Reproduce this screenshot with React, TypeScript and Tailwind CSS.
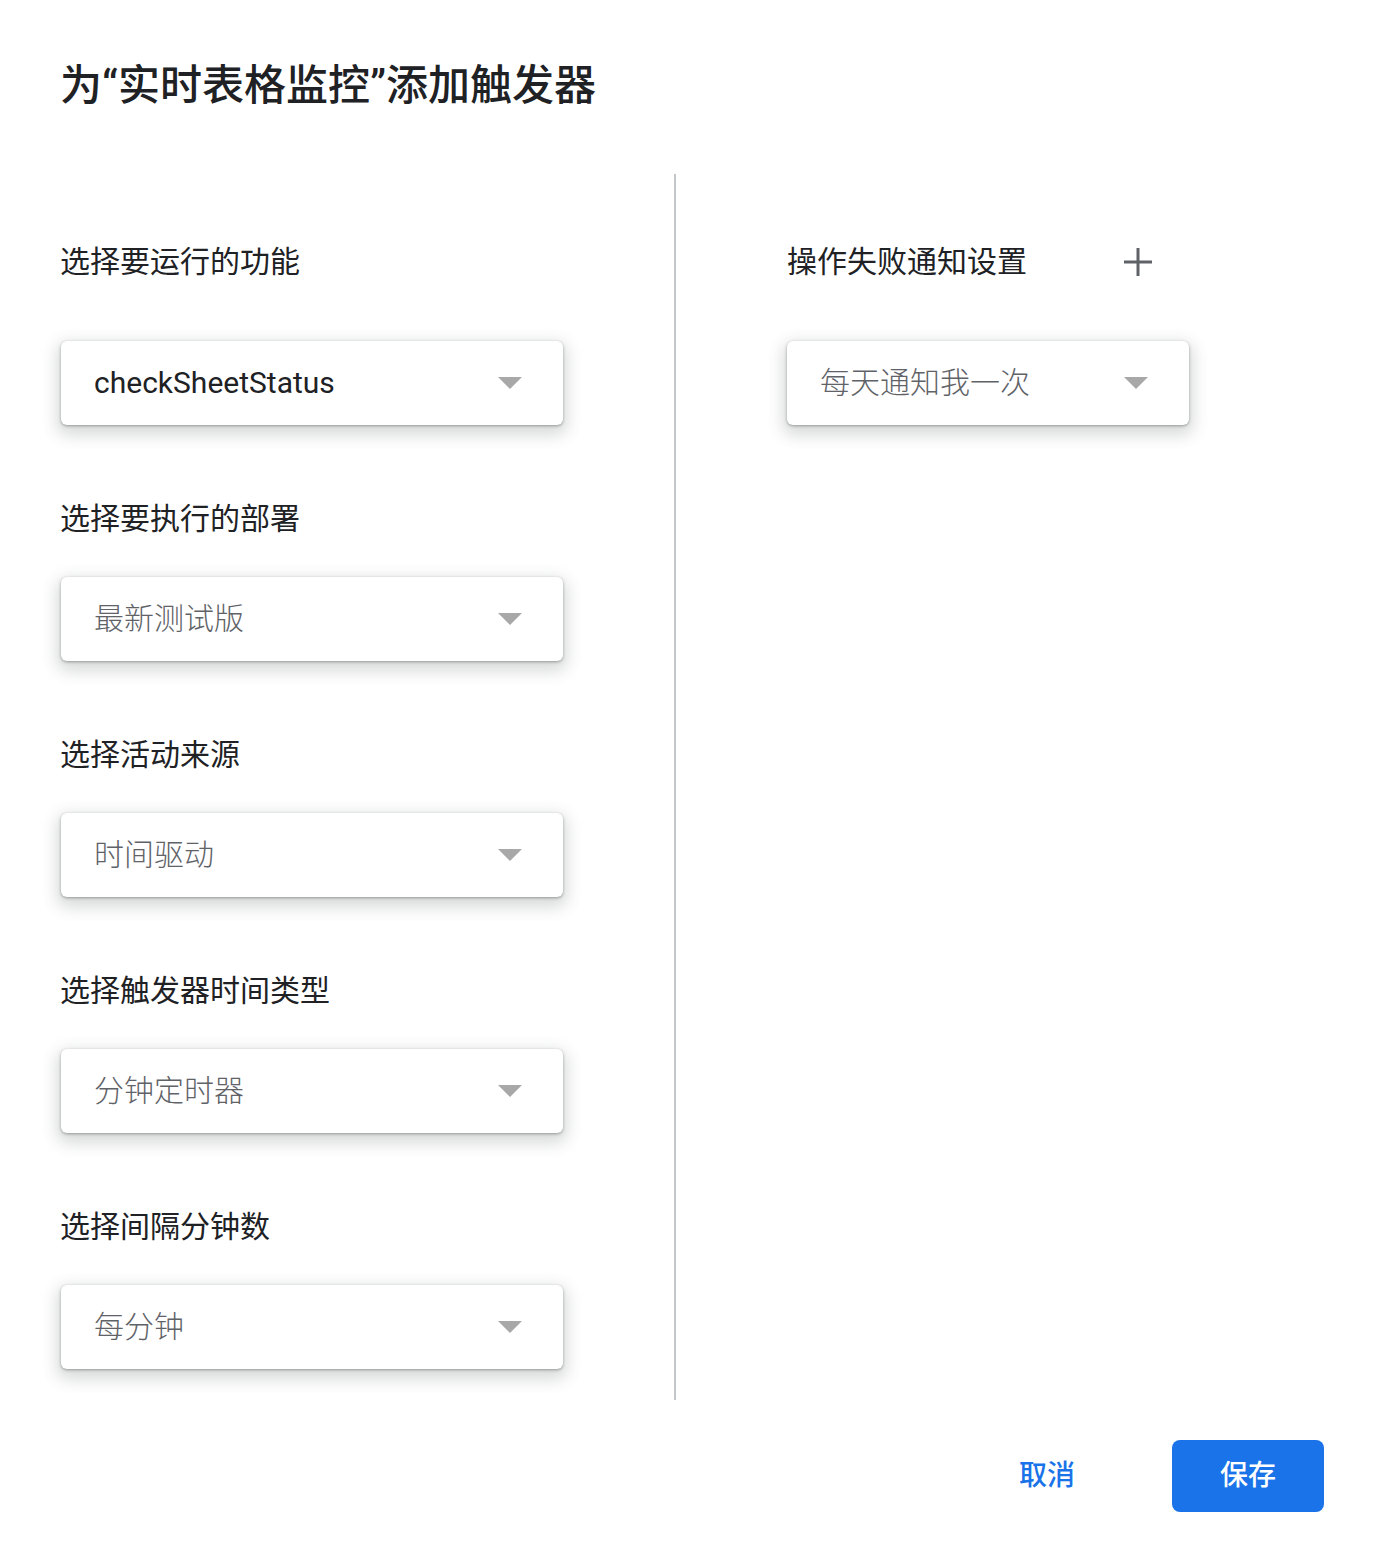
const font = "font-['Roboto','Noto_Sans_CJK_SC',sans-serif]";

type Field = { label: string; value: string; light?: boolean };

const fields: Field[] = [
  { label: "选择要运行的功能", value: "checkSheetStatus" },
  { label: "选择要执行的部署", value: "最新测试版", light: true },
  { label: "选择活动来源", value: "时间驱动", light: true },
  { label: "选择触发器时间类型", value: "分钟定时器", light: true },
  { label: "选择间隔分钟数", value: "每分钟", light: true },
];

function Caret() {
  return (
    <svg width="24" height="12" viewBox="0 0 24 12" className="shrink-0">
      <path d="M0 0 L24 0 L12 12 Z" fill="#a8a8a8" />
    </svg>
  );
}

function Select({ value, light, width }: { value: string; light?: boolean; width: string }) {
  return (
    <div
      className={`flex h-[84px] items-center justify-between rounded-[6px] bg-white pl-[33px] pr-[41px] shadow-[0_1px_3px_rgba(60,64,67,0.45),0_6px_16px_4px_rgba(60,64,67,0.2)] ${width}`}
    >
      <span
        className={`text-[30px] leading-none ${light ? "font-light text-[#5f6368]" : "text-[#202124]"}`}
      >
        {value}
      </span>
      <Caret />
    </div>
  );
}

export default function App() {
  return (
    <div className={`min-h-[1554px] bg-white ${font}`}>
      <h1 className="pl-[60px] pt-[65px] text-[42px] font-medium leading-[42px] text-[#202124]">
        为“实时表格监控”添加触发器
      </h1>

      <div className="mt-[67px] flex">
        <div className="w-[674px] pb-[31px] pl-[60px] pt-[68px]">
          {fields.map((f, i) => (
            <div key={f.label} className={i === 0 ? "" : "mt-[74px]"}>
              <div className="text-[30px] leading-[40px] text-[#202124]">{f.label}</div>
              <div className={`ml-px ${i === 0 ? "mt-[59px]" : "mt-[38px]"}`}>
                <Select value={f.value} light={f.light} width="w-[502px]" />
              </div>
            </div>
          ))}
        </div>

        <div className="w-[2px] bg-[#c4c7ca]" />

        <div className="pl-[111px] pt-[68px]">
          <div className="flex h-[40px] items-center">
            <span className="text-[30px] leading-[40px] text-[#202124]">操作失败通知设置</span>
            <svg width="28" height="28" viewBox="0 0 28 28" className="ml-[97px]">
              <path d="M14 0 V28 M0 14 H28" stroke="#5f6368" strokeWidth="3" />
            </svg>
          </div>
          <div className="mt-[59px]">
            <Select value="每天通知我一次" light width="w-[402px]" />
          </div>
        </div>
      </div>

      <div className="mt-[40px] flex items-center justify-end pr-[70px]">
        <button className="text-[28px] font-medium leading-none text-[#1a73e8]">取消</button>
        <button className="ml-[97px] flex h-[72px] w-[152px] items-center justify-center rounded-[8px] bg-[#1a73e8] text-[28px] font-medium leading-none text-white">
          保存
        </button>
      </div>
    </div>
  );
}
